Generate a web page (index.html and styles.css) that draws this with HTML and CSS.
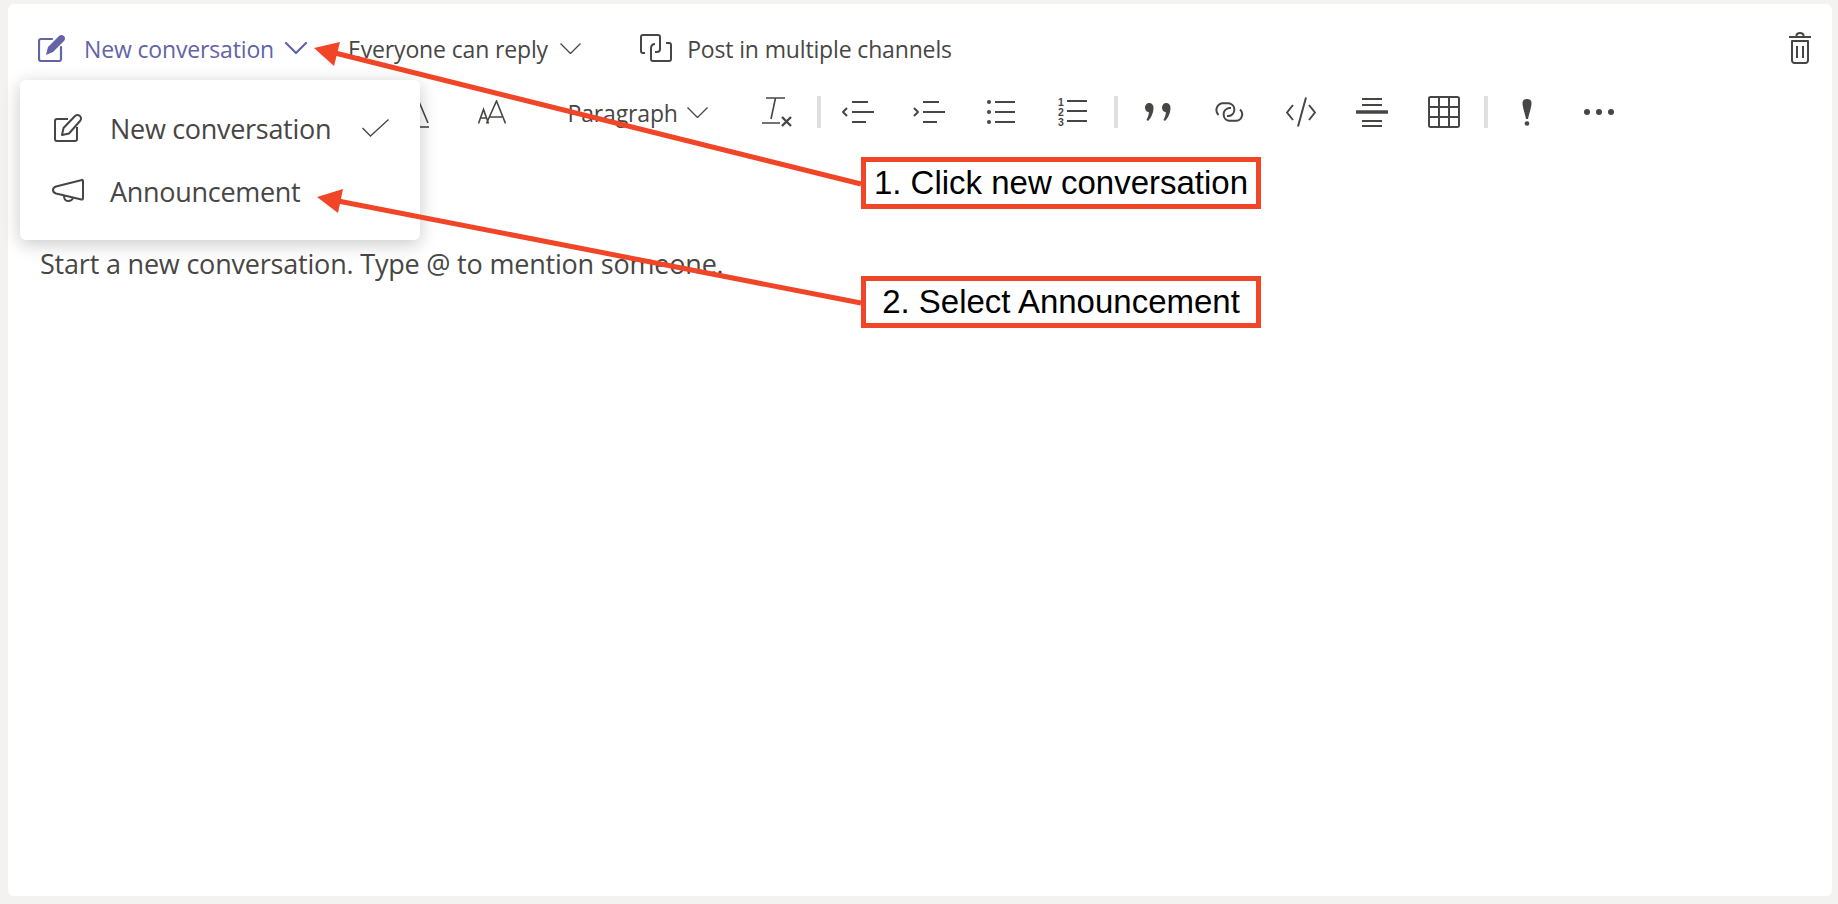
FILE: index.html
```html
<!DOCTYPE html>
<html lang="en">
<head>
<meta charset="utf-8">
<title>New conversation</title>
<link rel="stylesheet" href="styles.css">
</head>
<body>
<main class="card">
  <div class="top-row">
    <button class="top-btn active first">
      <svg class="ic-compose" width="28" height="28" viewBox="0 0 28 28"><path class="st-purple" d="M14 5H3a2 2 0 0 0-2 2v18a2 2 0 0 0 2 2h18a2 2 0 0 0 2-2V13"/><path class="fill-purple" d="M8 21 10 13 21 2Q23.500 0 26 2 28 4.500 26 7L15 18Z"/></svg>
      <span class="top-label l-conv">New conversation</span>
      <svg class="chev-bold" width="22" height="12" viewBox="0 0 22 12"><path class="st-purple" d="M1 1l10 10L21 1"/></svg>
    </button>
    <button class="top-btn reply">
      <span class="top-label l-reply">Everyone can reply</span>
      <svg class="chev" width="21" height="11" viewBox="0 0 21 11"><path class="st-thin" d="M.5.500l10 10 10-10"/></svg>
    </button>
    <button class="top-btn post">
      <svg class="ic-post" width="32" height="28" viewBox="0 0 32 28"><path class="st-dark" d="M5 19H3a2 2 0 0 1-2-2V3a2 2 0 0 1 2-2h15a2 2 0 0 1 2 2v12a3 3 0 0 1-3 3h-2"/><path class="st-dark" d="M11 14.500V25a2 2 0 0 0 2 2h16a2 2 0 0 0 2-2V11a2 2 0 0 0-2-2h-3M11 14.500Q11 10 15 10"/></svg>
      <span class="top-label l-post">Post in multiple channels</span>
    </button>
    <button class="trash" aria-label="Discard">
      <svg width="22" height="32" viewBox="0 0 22 32"><path class="st-dark" d="M0 5h22M7.500 5V3.500Q7.500 1 11 1t3.500 2.500V5M3 9h16v19.500a2.500 2.500 0 0 1-2.500 2.500h-11A2.500 2.500 0 0 1 3 28.500ZM8 14v12M14 14v12"/></svg>
    </button>
  </div>

  <div class="format-row">
    <span class="tool tool-a">
      <svg width="30" height="32" viewBox="0 0 30 32"><path class="st-dark1" d="M6 27 17 1l11 26"/><path class="st-dark1" d="M3 31h26"/></svg>
    </span>
    <span class="tool">
      <svg width="28" height="24" viewBox="0 0 28 24"><path class="st-dark1" d="M.500 23.500l5-14 5 14M2.500 18h6M8.500 23.500 18.500 1l9 22.500M12 17h12"/></svg>
    </span>
    <span class="para">
      <span class="para-label">Paragraph</span>
      <svg width="21" height="11" viewBox="0 0 21 11"><path class="st-thin" d="M.5.500l10 10 10-10"/></svg>
    </span>
    <span class="tool tool-tx">
      <svg width="31" height="30" viewBox="0 0 31 30"><path class="st-dark1" d="M5 1h19M14.500 1 10 22M1 26h18"/><path class="st-x" d="M21 20l9 9M30 20l-9 9"/></svg>
    </span>
    <span class="sep"></span>
    <span class="tool">
      <svg width="32" height="22" viewBox="0 0 32 22"><path class="st-dark" d="M5 7 1 11l4 4M10 1h16M10 11h22M10 21h14"/></svg>
    </span>
    <span class="tool">
      <svg width="32" height="22" viewBox="0 0 32 22"><path class="st-dark" d="M1 7l4 4-4 4M10 1h16M10 11h22M10 21h14"/></svg>
    </span>
    <span class="tool">
      <svg width="28" height="24" viewBox="0 0 28 24"><circle class="fill-dark" cx="2" cy="2" r="2"/><circle class="fill-dark" cx="2" cy="12" r="2"/><circle class="fill-dark" cx="2" cy="22" r="2"/><path class="st-dark" d="M8 2h20M8 12h20M8 22h20"/></svg>
    </span>
    <span class="tool">
      <svg width="30" height="30" viewBox="0 0 30 30"><text class="digit" x="1" y="8.500">1</text><text class="digit" x="1" y="18.500">2</text><text class="digit" x="1" y="28.500">3</text><path class="st-dark" d="M10 4h20M10 14h20M10 24h20"/></svg>
    </span>
    <span class="sep sep-mid"></span>
    <span class="tool">
      <svg width="26" height="18" viewBox="0 0 26 18"><path id="comma" class="fill-dark" d="M4 0C7 0 8.500 2 8.500 5 8.500 10 6 15 3 18L1.500 17C3 14 4 11 3.800 9 1.500 9 0 7 0 4.500 0 2 2 0 4 0Z"/><path class="fill-dark" d="M21 0C24 0 25.500 2 25.500 5 25.500 10 23 15 20 18L18.500 17C20 14 21 11 20.800 9 18.500 9 17 7 17 4.500 17 2 19 0 21 0Z"/></svg>
    </span>
    <span class="tool">
      <svg width="30" height="20" viewBox="0 0 30 20"><path class="st-dark" d="M4.500 13A7 7 0 0 1 8 1.200h7A6.500 6.500 0 0 1 15 14h-2M26 7.500a6.500 6.500 0 0 1-3.500 11.300H15A6.500 6.500 0 0 1 15 6h2"/></svg>
    </span>
    <span class="tool">
      <svg width="30" height="30" viewBox="0 0 30 30"><path class="st-dark" d="M7 8 1 15.500 7 23M23 8l6 7.500L23 23M20 .500 12 29.500"/></svg>
    </span>
    <span class="tool">
      <svg width="32" height="30" viewBox="0 0 32 30"><path class="st-dark" d="M6 2h20M6 8h20M6 24h20M6 29h20"/><path class="st-thick" d="M1 15h30"/></svg>
    </span>
    <span class="tool">
      <svg width="32" height="32" viewBox="0 0 32 32"><path class="st-grid" d="M2.500 1h27A1.500 1.500 0 0 1 31 2.500v27a1.500 1.500 0 0 1-1.500 1.500h-27A1.500 1.500 0 0 1 1 29.500v-27A1.500 1.500 0 0 1 2.500 1ZM11 1v30M21 1v30M1 11h30M1 21h30"/></svg>
    </span>
    <span class="sep sep-mid sep-last"></span>
    <span class="tool">
      <svg width="10" height="27" viewBox="0 0 10 27"><path class="fill-dark" d="M5 0C8 0 9.500 1.500 9.500 4 9.500 8 7 15 6 20H4C3 15 .5 8 .5 4 .5 1.500 2 0 5 0Z"/><circle class="fill-dark" cx="5" cy="24.500" r="2.300"/></svg>
    </span>
    <span class="tool">
      <svg width="30" height="6" viewBox="0 0 30 6"><circle class="fill-dark" cx="3" cy="3" r="3"/><circle class="fill-dark" cx="15" cy="3" r="3"/><circle class="fill-dark" cx="27" cy="3" r="3"/></svg>
    </span>
  </div>

  <div class="editor">Start a new conversation. Type @ to mention someone.</div>

  <div class="menu">
    <div class="menu-item">
      <span class="menu-icon"><svg width="28" height="28" viewBox="0 0 28 28"><path class="st-dark" d="M14 5H3a2 2 0 0 0-2 2v18a2 2 0 0 0 2 2h18a2 2 0 0 0 2-2V13"/><path class="st-dark" d="M8 21 9.500 14 21 2Q23.500 0 26 2 28 4.500 26 7L15 19.500Z"/></svg></span>
      <span class="menu-label">New conversation</span>
      <svg class="menu-check" width="27" height="18" viewBox="0 0 27 18"><path class="st-thin" d="M.5 9l8 8L26.500.5"/></svg>
    </div>
    <div class="menu-item item-second">
      <span class="menu-icon"><svg width="32" height="24" viewBox="0 0 32 24"><path class="st-dark" d="M30 1 4 7.500Q1 8.500 1 11t3 3.500L29.500 20.500Q31 21 31 19V2Q31 .8 30 1Z"/><path class="st-dark" d="M12 16.500Q12 22 16 22t5-3"/></svg></span>
      <span class="menu-label">Announcement</span>
    </div>
  </div>

  <div class="callout callout-one">1. Click new conversation</div>
  <div class="callout callout-two">2. Select Announcement</div>

  <svg class="arrows" width="1838" height="904" viewBox="0 0 1838 904">
    <path class="arrow-line" d="M335 53 861 184"/>
    <path class="arrow-head" d="M314 48 340 42 334 66Z"/>
    <path class="arrow-line" d="M338 201 861 303"/>
    <path class="arrow-head" d="M317 197 343 189 338 213Z"/>
  </svg>
</main>
</body>
</html>
```

FILE: styles.css
```css
* { box-sizing: border-box; }

html, body { margin: 0; height: 100%; }

body {
  width: 1838px;
  height: 904px;
  padding: 4px 6px 8px 8px;
  background: #f3f2f1;
  font-family: "Open Sans", "Noto Sans", sans-serif;
  color: #484644;
  overflow: hidden;
}

svg { display: block; flex: none; fill: none; }

.card {
  position: relative;
  height: 892px;
  background: #fff;
  border-radius: 6px;
}

.top-row {
  display: flex;
  align-items: center;
  height: 88px;
  padding: 0 21px 0 30px;
}

.top-btn, .trash {
  display: flex;
  align-items: center;
  padding: 0;
  border: 0;
  background: none;
  font: inherit;
  color: inherit;
}

.top-label {
  padding-top: 2px;
  font-size: 23px;
  letter-spacing: -0.15px;
  white-space: nowrap;
}

.active { color: #6264a7; }
.l-conv { width: 189px; margin: 0 12px 0 18px; }
.reply { margin-left: 41px; }
.l-reply { width: 200px; margin-right: 12px; }
.post { margin-left: 59px; }
.l-post { width: 265px; margin-left: 15px; }
.trash { margin-left: auto; }

.format-row {
  display: flex;
  align-items: center;
  height: 40px;
  padding-left: 372px;
}

.tool {
  display: flex;
  flex: none;
  align-items: center;
  justify-content: center;
  width: 71.500px;
  height: 40px;
}

.tool-a { width: 70px; margin-right: 6px; }
.tool-tx { margin-left: 33px; }

.para {
  display: flex;
  flex: none;
  align-items: center;
  width: 140px;
  margin-left: 40px;
}

.para-label {
  width: 120px;
  padding-top: 2px;
  font-size: 23px;
  letter-spacing: -0.15px;
}

.sep {
  flex: none;
  width: 4px;
  height: 32px;
  margin-left: 4.500px;
  margin-right: 1.500px;
  background: #e1dfdd;
}

.sep-mid { margin: 0 4px 0 6px; }
.sep-last { margin: 0 4px; }

.digit {
  font-family: "Liberation Sans", sans-serif;
  font-size: 10.500px;
  font-weight: 700;
  fill: #484644;
}

.editor {
  padding: 114px 0 0 32px;
  font-size: 27px;
  line-height: 36px;
  letter-spacing: -0.2px;
  white-space: nowrap;
}

.menu {
  position: absolute;
  top: 76px;
  left: 12px;
  width: 400px;
  height: 160px;
  padding: 16px 31px 16px 32px;
  background: #fff;
  border-radius: 6px;
  box-shadow: 0 4px 18px rgba(0, 0, 0, .22);
}

.menu-item { display: flex; align-items: center; height: 64px; }
.item-second { height: 62px; }
.menu-icon { display: flex; justify-content: center; width: 32px; margin-right: 26px; }
.menu-label { font-size: 27px; letter-spacing: -0.3px; white-space: nowrap; }
.menu-check { margin-left: auto; }

.callout {
  position: absolute;
  left: 853px;
  width: 400px;
  height: 52px;
  border: 5px solid #f04526;
  background: #fff;
  color: #000;
  font-family: "Liberation Sans", Arial, sans-serif;
  font-size: 33px;
  line-height: 42px;
  text-align: center;
  white-space: nowrap;
}

.callout-one { top: 153px; }
.callout-two { top: 272px; }

.arrows {
  position: absolute;
  top: -4px;
  left: -8px;
  pointer-events: none;
}

.arrow-line { stroke: #f04526; stroke-width: 5; }
.arrow-head { fill: #f04526; }

.st-purple { stroke: #6264a7; stroke-width: 2.200; stroke-linecap: round; stroke-linejoin: round; }
.fill-purple { fill: #6264a7; }
.st-thin { stroke: #484644; stroke-width: 1.300; }
.st-dark { stroke: #484644; stroke-width: 2; stroke-linejoin: round; }
.st-dark1 { stroke: #484644; stroke-width: 1.600; }
.st-x { stroke: #484644; stroke-width: 2.400; }
.st-thick { stroke: #484644; stroke-width: 3.500; stroke-linecap: round; }
.st-grid { stroke: #484644; stroke-width: 2; }
.fill-dark { fill: #484644; }
```
